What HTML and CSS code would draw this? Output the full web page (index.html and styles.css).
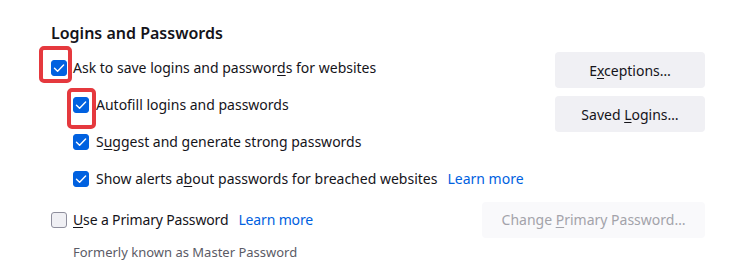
FILE: index.html
```html
<!DOCTYPE html>
<html>
<head>
<meta charset="utf-8">
<link rel="stylesheet" href="styles.css">
</head>
<body>
<section class="pane">
  <h2 class="title">Logins and Passwords</h2>
  <div class="main">
    <div class="rows">
      <div class="row">
        <span class="cb checked"><svg viewBox="0 0 16 16"><path d="M3.5 8.2 L6.6 11.2 L12.6 5" /></svg><span class="mark mark1"></span></span>
        <span class="label">Ask to save logins and passwor<u>d</u>s for websites</span>
      </div>
      <div class="row sub">
        <span class="cb checked"><svg viewBox="0 0 16 16"><path d="M3.5 8.2 L6.6 11.2 L12.6 5" /></svg><span class="mark mark2"></span></span>
        <span class="label">Autof<u>i</u>ll logins and passwords</span>
      </div>
      <div class="row sub">
        <span class="cb checked"><svg viewBox="0 0 16 16"><path d="M3.5 8.2 L6.6 11.2 L12.6 5" /></svg></span>
        <span class="label">S<u>u</u>ggest and generate strong passwords</span>
      </div>
      <div class="row sub">
        <span class="cb checked"><svg viewBox="0 0 16 16"><path d="M3.5 8.2 L6.6 11.2 L12.6 5" /></svg></span>
        <span class="label">Show alerts a<u>b</u>out passwords for breached websites</span>
        <a class="link">Learn more</a>
      </div>
    </div>
    <div class="buttons">
      <button class="btn">E<u>x</u>ceptions…</button>
      <button class="btn">Saved <u>L</u>ogins…</button>
    </div>
  </div>
  <div class="row primary">
    <span class="cb"></span>
    <span class="label tight"><u>U</u>se a Primary Password</span>
    <a class="link tight">Learn more</a>
    <button class="btn wide" disabled>Change <u>P</u>rimary Password…</button>
  </div>
  <div class="note">Formerly known as Master Password</div>
</section>
</body>
</html>
```

FILE: styles.css
```css
html, body {
  margin: 0;
  padding: 0;
  background: #ffffff;
}
body {
  font-family: "Noto Sans", "Open Sans", sans-serif;
  font-size: 14px;
  color: #15141a;
}
.pane {
  width: 654px;
  padding: 0 35px 0 51px;
}
.title {
  margin: 0;
  padding-top: 22px;
  height: 27px;
  font-size: 16px;
  font-weight: 600;
  line-height: 22px;
}
.main {
  display: flex;
  justify-content: space-between;
  align-items: flex-start;
}
.rows {
  display: flex;
  flex-direction: column;
}
.row {
  display: flex;
  align-items: center;
  height: 37px;
}
.row.sub {
  padding-left: 22px;
}
.cb {
  position: relative;
  flex: none;
  width: 16px;
  height: 16px;
  box-sizing: border-box;
  border-radius: 3px;
  border: 1px solid #8f8f9d;
  background: #f0f0f4;
  margin-right: 6px;
}
.cb.checked {
  background: #0061e0;
  border-color: #0061e0;
}
.cb svg {
  position: absolute;
  left: -1px;
  top: -1px;
  width: 16px;
  height: 16px;
}
.cb svg path {
  fill: none;
  stroke: #ffffff;
  stroke-width: 1.4;
  stroke-linecap: round;
  stroke-linejoin: round;
}
.row.sub .cb {
  margin-right: 7px;
}
.mark {
  position: absolute;
  border: 4px solid #e5393e;
  border-radius: 5px;
  box-sizing: border-box;
}
.mark1 {
  left: -13px;
  top: -15px;
  width: 33px;
  height: 37px;
}
.mark2 {
  left: -7px;
  top: -10px;
  width: 29px;
  height: 41px;
}
.label u {
  text-decoration-thickness: 1px;
  text-underline-offset: 2px;
}
.tight {
  letter-spacing: -0.15px;
}
.link {
  color: #0061e0;
  margin-left: 10px;
}
.buttons {
  display: flex;
  flex-direction: column;
  gap: 8px;
  margin-top: 3px;
}
.btn {
  font-family: inherit;
  font-size: 14px;
  color: #15141a;
  background: #f0f0f4;
  border: none;
  border-radius: 4px;
  height: 36px;
  width: 150px;
  padding: 0;
}
.btn u {
  text-underline-offset: 2px;
}
.btn.wide {
  width: 223px;
  margin-left: auto;
  background: #f9f9fb;
  color: #a3a3aa;
}
.row.primary {
  height: 39px;
  padding-top: 3px;
}
.note {
  padding-left: 22px;
  padding-top: 4px;
  font-size: 13px;
  color: #5b5b66;
}
```
